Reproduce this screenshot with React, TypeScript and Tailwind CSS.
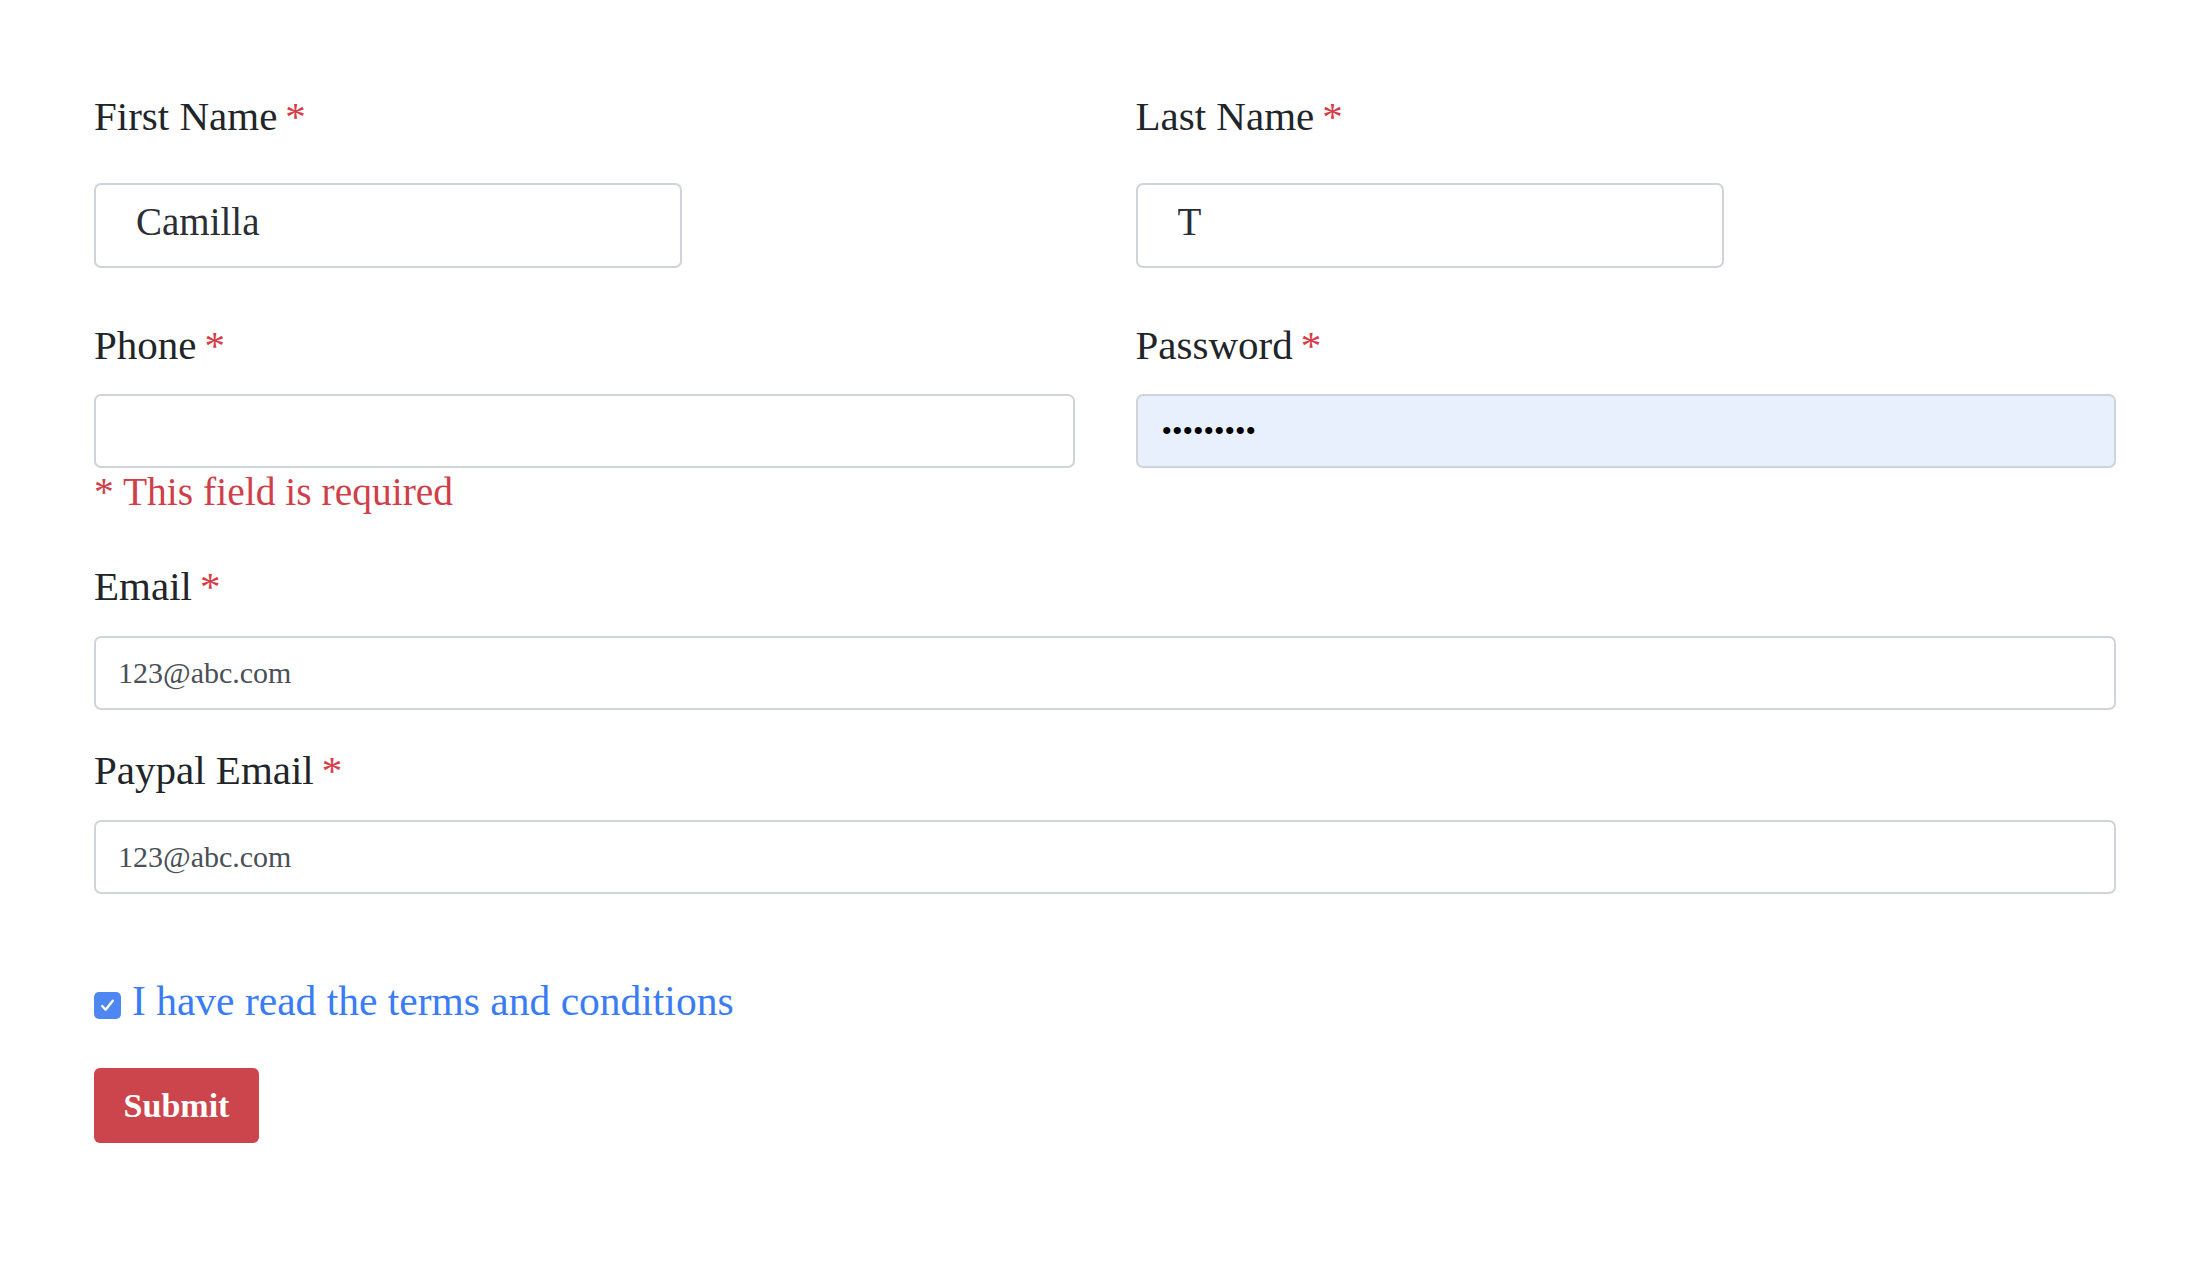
import React from 'react';

const labelCls = 'block text-[41px] leading-[48px] text-[#212529]';
const inputCls =
  'block w-full h-[74px] rounded-[7px] border-2 border-[#ced4da] bg-white px-[22px] text-[30px] text-[#495057] outline-none';
const nameInputCls =
  'mt-[43px] block h-[85px] w-[60%] rounded-[7px] border-2 border-[#ced4da] bg-white px-[40px] pb-[8px] text-[39px] text-[#2a2e35] outline-none';

function Label({ children }: { children: React.ReactNode }) {
  return (
    <label className={labelCls}>
      {children}
      <span className="ml-[8px] text-[#d63c47]">*</span>
    </label>
  );
}

export default function App() {
  return (
    <div className="min-h-screen bg-white px-[94px] pt-[92px] font-['Liberation_Serif',serif]">
      <form onSubmit={e => e.preventDefault()}>
        <div className="grid grid-cols-2 gap-x-[61px]">
          <div>
            <Label>First Name</Label>
            <input className={nameInputCls} defaultValue="Camilla" />
          </div>
          <div>
            <Label>Last Name</Label>
            <input className={nameInputCls} defaultValue="T" />
          </div>
        </div>

        <div className="mt-[53px] grid grid-cols-2 gap-x-[61px]">
          <div>
            <Label>Phone</Label>
            <input className={`mt-[25px] ${inputCls}`} defaultValue="" />
            <p className="text-[39.5px] leading-[48px] text-[#cf3f4a]">* This field is required</p>
          </div>
          <div>
            <Label>Password</Label>
            <input
              type="password"
              className="mt-[25px] block h-[74px] w-full rounded-[7px] border-2 border-[#ced4da] bg-[#e8f0fe] px-[24px] text-[30px] text-black outline-none"
              defaultValue="123456789"
            />
          </div>
        </div>

        <div className="mt-[46px]">
          <Label>Email</Label>
          <input className={`mt-[26px] ${inputCls}`} defaultValue="123@abc.com" />
        </div>

        <div className="mt-[36px]">
          <Label>Paypal Email</Label>
          <input className={`mt-[26px] ${inputCls}`} defaultValue="123@abc.com" />
        </div>

        <div className="mt-[83px] flex items-start gap-[11px]">
          <span className="mt-[15px] flex h-[27px] w-[27px] items-center justify-center rounded-[5px] bg-[#4f87f2]">
            <svg width="17" height="17" viewBox="0 0 16 16" fill="none">
              <path d="M3 8.5l3.2 3.5L13 3.5" stroke="white" strokeWidth="2.2" strokeLinecap="round" strokeLinejoin="round" />
            </svg>
          </span>
          <span className="text-[41.5px] leading-[48px] text-[#3a7cf5]">I have read the terms and conditions</span>
        </div>

        <button
          type="submit"
          className="mt-[43px] flex h-[75px] w-[165px] items-center justify-center rounded-[6px] bg-[#cc454d] text-[34px] font-bold text-white"
        >
          Submit
        </button>
      </form>
    </div>
  );
}
